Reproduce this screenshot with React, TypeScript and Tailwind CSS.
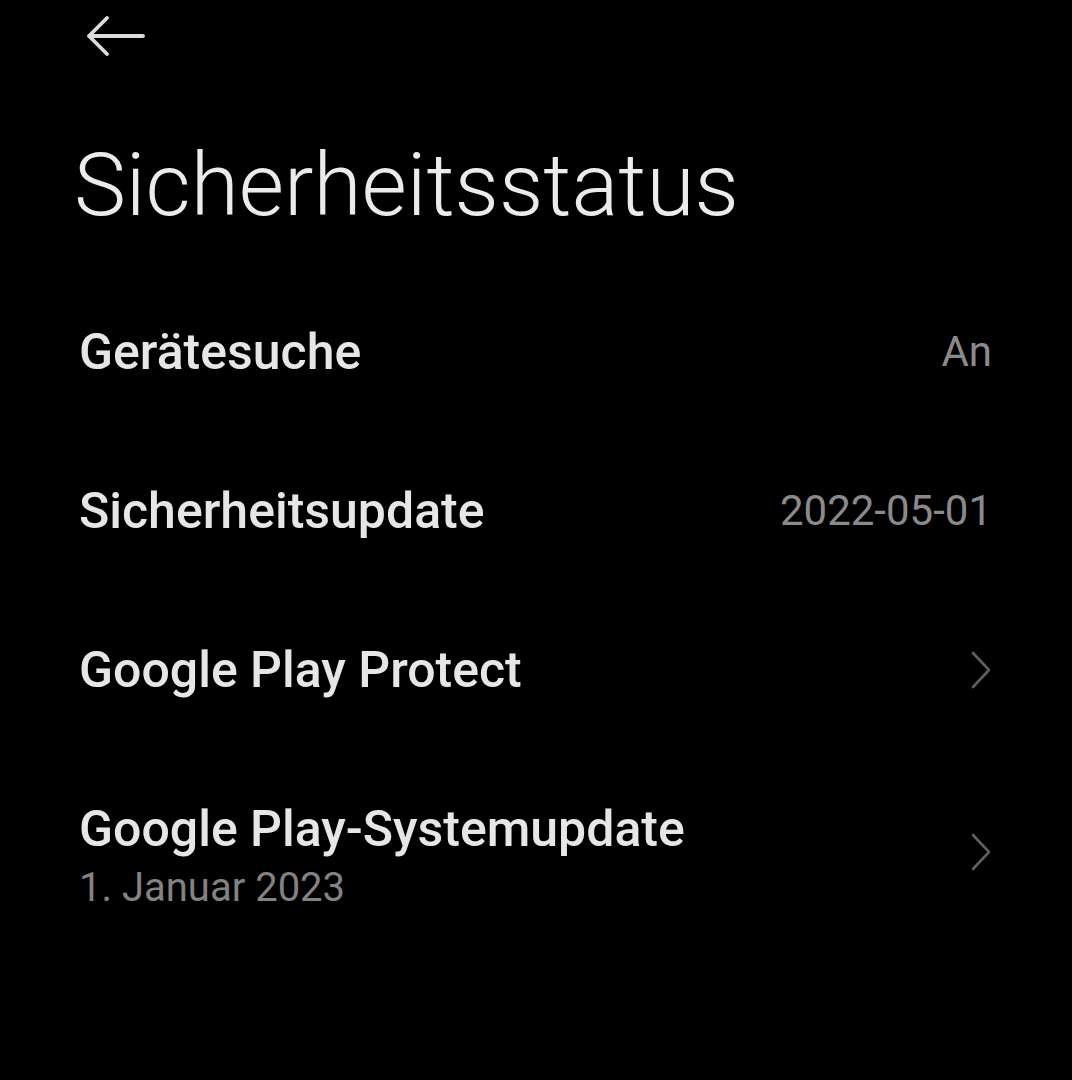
import React from "react";

function Chevron() {
  return (
    <svg width="22" height="38" viewBox="0 0 22 38" fill="none">
      <path d="M3 2 L19 19 L3 36" stroke="#5e5e5e" strokeWidth="2.6" strokeLinecap="round" strokeLinejoin="round" />
    </svg>
  );
}

function Row({ title, value, chevron }: { title: string; value?: string; chevron?: boolean }) {
  return (
    <div className="flex h-[159px] items-center justify-between pl-[79px] pr-[80px]">
      <span className="text-[50px] font-medium leading-[60px] text-[#e6e6e6]">{title}</span>
      {value && <span className="text-[42px] leading-[50px] text-[#8a8a8a]">{value}</span>}
      {chevron && <Chevron />}
    </div>
  );
}

export default function App() {
  return (
    <div className="h-[1080px] w-full overflow-hidden bg-black" style={{ fontFamily: "Roboto, 'Noto Sans', sans-serif" }}>
      <div className="flex h-[72px] items-center pl-[86px]">
        <svg width="60" height="40" viewBox="0 0 60 40" fill="none">
          <path d="M3 20 H57 M21 2 L3 20 L21 38" stroke="#dcdcdc" strokeWidth="3.8" strokeLinecap="round" strokeLinejoin="round" />
        </svg>
      </div>
      <div className="h-[200px] pl-[74px] pt-[69px]">
        <h1 className="text-[87.5px] font-light leading-[88px] text-[#ebebeb]">Sicherheitsstatus</h1>
      </div>
      <Row title="Gerätesuche" value="An" />
      <Row title="Sicherheitsupdate" value="2022-05-01" />
      <Row title="Google Play Protect" chevron />
      <div className="flex items-start justify-between pl-[79px] pr-[80px] pt-[50px]">
        <div className="flex flex-col">
          <span className="text-[50px] font-medium leading-[60px] text-[#e6e6e6]">Google Play-Systemupdate</span>
          <span className="text-[40px] leading-[58px] text-[#828282]">1. Januar 2023</span>
        </div>
        <div className="mt-[34px]">
          <Chevron />
        </div>
      </div>
    </div>
  );
}
